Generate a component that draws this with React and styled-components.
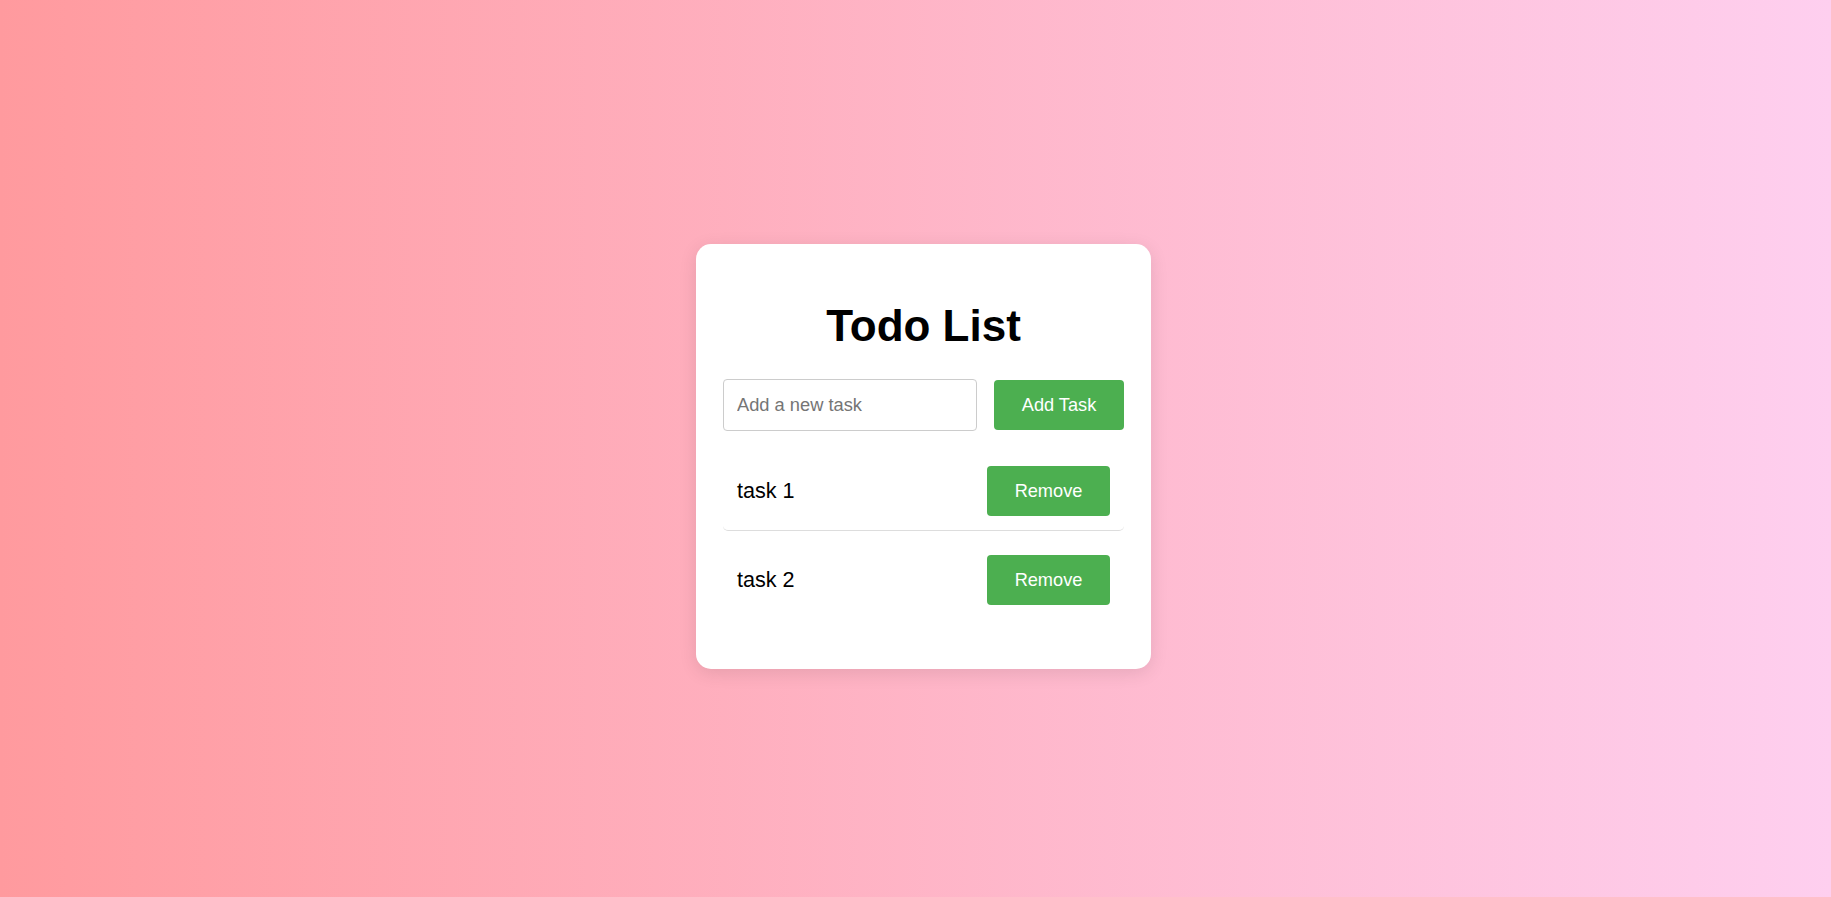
import styled, { createGlobalStyle } from 'styled-components'
import { useState } from 'react'

const GlobalStyle = createGlobalStyle`
    html {
        overflow: hidden;
    }
    body {
        margin: 8px;
        font-family: "Liberation Sans", Arial, sans-serif;
        background: linear-gradient(to right, #ff9a9e, #fecfef);
    }
`
const Page = styled.div`
    width: 100vw;
    height: 100vh;

    display: flex;
    justify-content: center;
    align-items: center;
`
const Card = styled.div`
    width: 401px;
    padding: 0 27px;
    background: #fff;
    border-radius: 15px;
    box-shadow: 0 4px 18px rgba(0, 0, 0, 0.1);
`
const Title = styled.h1`
    margin: 0;
    padding: 58px 0 29px;
    text-align: center;
    font-size: 44px;
    line-height: 48px;
    font-weight: bold;
    color: #000;
`
const InputRow = styled.div`
    display: flex;
    align-items: center;
    gap: 17px;
`
const TaskInput = styled.input`
    flex: 1;
    min-width: 0;
    height: 52px;
    box-sizing: border-box;
    padding: 0 13px;
    border: 1px solid #ccc;
    border-radius: 4px;
    font-family: inherit;
    font-size: 18.3px;
    outline: none;

    &::placeholder {
        color: #757575;
    }
`
const GreenButton = styled.button`
    width: ${p => p.$w}px;
    height: 50px;
    padding: 0;
    border: none;
    border-radius: 4px;
    background: #4caf50;
    color: #fff;
    font-family: inherit;
    font-size: 18.2px;
    cursor: pointer;
`
const List = styled.ul`
    list-style: none;
    margin: 21px 0 0;
    padding: 0 0 50px;
`
const Row = styled.li`
    display: flex;
    justify-content: space-between;
    align-items: center;
    padding: 14px;
    margin-bottom: 10px;
    border-bottom: 1px solid #ddd;
    border-radius: 5px;
    font-size: 21.6px;
    color: #000;

    &:last-child {
        margin-bottom: 0;
        border-bottom: none;
    }
`

export default function App() {
    const [text, setText] = useState('')
    const [tasks, setTasks] = useState(['task 1', 'task 2'])

    const onAdd = () => {
        if (!text.trim()) return
        setTasks([...tasks, text.trim()])
        setText('')
    }
    const onRemove = i => setTasks(tasks.filter((_, j) => j !== i))

    return (
        <Page>
            <GlobalStyle />
            <Card>
                <Title>Todo List</Title>
                <InputRow>
                    <TaskInput
                        type='text'
                        placeholder='Add a new task'
                        value={text}
                        onChange={e => setText(e.target.value)}
                    />
                    <GreenButton $w={130} onClick={onAdd}>Add Task</GreenButton>
                </InputRow>
                <List>
                    {tasks.map((t, i) => (
                        <Row key={i}>
                            <span>{t}</span>
                            <GreenButton $w={123} onClick={() => onRemove(i)}>Remove</GreenButton>
                        </Row>
                    ))}
                </List>
            </Card>
        </Page>
    )
}
